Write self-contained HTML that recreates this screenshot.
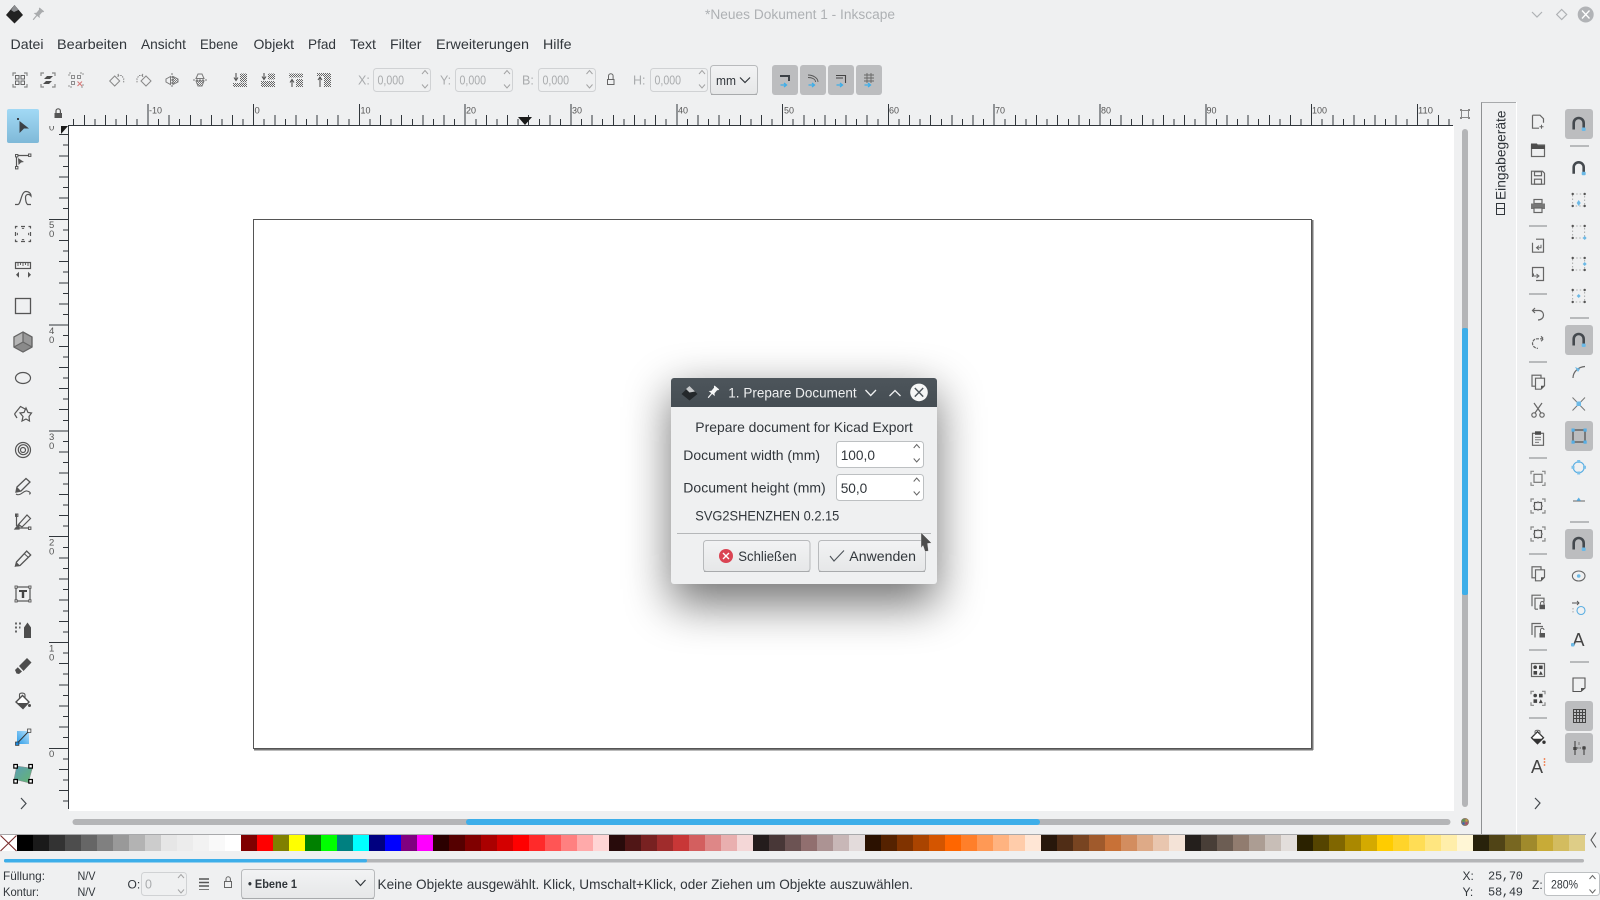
<!DOCTYPE html>
<html lang="de"><head><meta charset="utf-8"><title>Inkscape</title>
<style>
html,body{margin:0;padding:0;background:#eff0f1;width:1600px;height:900px;overflow:hidden}
#w{position:relative;width:1600px;height:900px;overflow:hidden}
svg{position:absolute;left:0;top:0}
text{font-family:"Liberation Sans",sans-serif;fill:#31363b;font-size:14px}
.s{font-size:12px}.r{font-size:9.5px;fill:#555}
.g{fill:#a9abad;font-size:12.5px}
.m{font-family:"Liberation Mono",monospace;font-size:12px}
#p{position:absolute;left:17px;top:835px;height:16px;display:flex}
#p i{display:block;width:16px;height:16px;flex:none}
</style></head><body><div id="w">
<svg width="1600" height="900" viewBox="0 0 1600 900" xmlns="http://www.w3.org/2000/svg">
<defs>
<pattern id="d" width="2" height="2" patternUnits="userSpaceOnUse"><rect width="1" height="1" fill="#666"/><rect x="1" y="1" width="1" height="1" fill="#666"/></pattern>
<linearGradient id="sel" x1="0" y1="0" x2="0" y2="1"><stop offset="0" stop-color="#a2d9f5"/><stop offset="1" stop-color="#7fb9d8"/></linearGradient>
<linearGradient id="btn" x1="0" y1="0" x2="0" y2="1"><stop offset="0" stop-color="#f2f3f4"/><stop offset="1" stop-color="#e6e7e8"/></linearGradient>
<linearGradient id="tb" x1="0" y1="0" x2="0" y2="1"><stop offset="0" stop-color="#4d555b"/><stop offset="1" stop-color="#454d53"/></linearGradient>
<linearGradient id="gr" x1="0" y1="1" x2="1" y2="0"><stop offset="0" stop-color="#2f9de8"/><stop offset="1" stop-color="#b4e0fb"/></linearGradient>
<linearGradient id="ms" x1="0" y1="0" x2="1" y2="1"><stop offset="0" stop-color="#5a9db8"/><stop offset="1" stop-color="#65b56f"/></linearGradient>
<filter id="sh" x="-50%" y="-50%" width="200%" height="200%"><feGaussianBlur stdDeviation="23"/></filter>
<g id="rt" fill="none" stroke="#31363b" stroke-width="1" shape-rendering="crispEdges"><path d="M0 125V104M10.58 125V119M21.16 125V115M31.74 125V119M42.32 125V115M52.9 125V119M63.48 125V115M74.06 125V119M84.64 125V115M95.22 125V119"/></g>
<g id="vt" fill="none" stroke="#31363b" stroke-width="1" shape-rendering="crispEdges"><path d="M68 0H49M68 10.58H63M68 21.16H59M68 31.74H63M68 42.32H59M68 52.9H63M68 63.48H59M68 74.06H63M68 84.64H59M68 95.22H63"/></g>
<g id="mag"><path d="M-5 5.5V-1a5 5 0 0 1 10 0V5.5" fill="none" stroke="#44494e" stroke-width="2.6"/><rect x="3" y="3.5" width="4" height="3.5" rx="1" fill="#6cb9e6"/></g>
<g id="nd"><rect x="-6" y="-6" width="12" height="12" fill="none" stroke="#999" stroke-width=".8" stroke-dasharray="1.5 2"/><g fill="#555"><circle cx="-6" cy="-6" r="1.2"/><circle cx="6" cy="-6" r="1.2"/><circle cx="-6" cy="6" r="1.2"/><circle cx="6" cy="6" r="1.2"/></g></g>
<g id="br" fill="none" stroke="#888" stroke-width="1.2"><path d="M-7-4V-7H-4M4-7H7V-4M7 4V7H4M-4 7H-7V4"/></g>
<g id="ub"><path d="M-3 0 0-3.5 3 0" fill="none" stroke="#666" stroke-width="1"/></g>
<g id="db"><path d="M-3-1.5 0 2 3-1.5" fill="none" stroke="#666" stroke-width="1"/></g>
<g id="ar"><path d="M-4.5 5H1M-1 3 1.5 5-1 7" fill="none" stroke="#3daee9" stroke-width="1.3"/></g>
<path id="pin" d="M-3-6H3V-5L2-4V0L4 2H-4L-2 0V-4L-3-5ZM-.6 2H.6V7.5H-.6Z"/>
</defs>
<rect width="1600" height="900" fill="#eff0f1"/>

<!-- title bar -->
<path d="M14.5 5 23 15 14.5 23.5 6 15Z" fill="#222"/><path d="M14.5 5 18.5 10 14 12 11 10Z" fill="#8b8d90"/>
<use href="#pin" transform="translate(38,14) rotate(40)" fill="#a9abad"/>
<text x="705" y="19" textLength="190" lengthAdjust="spacingAndGlyphs" style="fill:#aeb1b4;font-size:13.5px">*Neues Dokument 1 - Inkscape</text>
<path d="M1532 12 1537 17 1542 12" fill="none" stroke="#aeb1b4" stroke-width="1.2"/>
<path d="M1561.7 9.5 1566.7 14.5 1561.7 19.5 1556.7 14.5Z" fill="none" stroke="#aeb1b4" stroke-width="1.2"/>
<circle cx="1585.7" cy="14.5" r="8" fill="#b1b3b6"/><path d="M1582 10.5 1589.5 18.5M1589.5 10.5 1582 18.5" stroke="#fff" stroke-width="1.3"/>

<!-- menu -->
<g>
<text x="10.5" y="49" textLength="33" lengthAdjust="spacingAndGlyphs">Datei</text>
<text x="57" y="49" textLength="70" lengthAdjust="spacingAndGlyphs">Bearbeiten</text>
<text x="141" y="49" textLength="45" lengthAdjust="spacingAndGlyphs">Ansicht</text>
<text x="200" y="49" textLength="38" lengthAdjust="spacingAndGlyphs">Ebene</text>
<text x="253.5" y="49" textLength="40.5" lengthAdjust="spacingAndGlyphs">Objekt</text>
<text x="308" y="49" textLength="28" lengthAdjust="spacingAndGlyphs">Pfad</text>
<text x="350" y="49" textLength="26" lengthAdjust="spacingAndGlyphs">Text</text>
<text x="390" y="49" textLength="31.5" lengthAdjust="spacingAndGlyphs">Filter</text>
<text x="436" y="49" textLength="93" lengthAdjust="spacingAndGlyphs">Erweiterungen</text>
<text x="543" y="49" textLength="28.5" lengthAdjust="spacingAndGlyphs">Hilfe</text>
</g>

<!-- selector toolbar icons -->
<g fill="none" stroke="#666" stroke-width="1">
<g transform="translate(20,80)"><use href="#br"/><rect x="-4.5" y="-4.5" width="3.5" height="3.5"/><rect x="1" y="-4.5" width="3.5" height="3.5"/><rect x="-4.5" y="1" width="3.5" height="3.5"/><rect x="1" y="1" width="3.5" height="3.5"/></g>
<g transform="translate(48,80)"><use href="#br"/><path d="M-4-1 -1-4H5L2-1ZM-5 4-2 1H4L1 4Z" fill="#4d4d4d" stroke="none"/></g>
<g transform="translate(76,80)" opacity=".7"><use href="#br" stroke-dasharray="2 1"/><rect x="-4.5" y="-4.5" width="3" height="3"/><rect x="1.5" y="-4.5" width="3" height="3"/><rect x="-4.5" y="1.5" width="3" height="3"/><path d="M1.5 1.5 6 6M6 1.5 1.5 6" stroke="#c44"/></g>
<g transform="translate(116.7,80)" opacity=".75"><path d="M-2-2 3 3-2 8-7 3Z" transform="translate(0,-2)"/><path d="M2-6 .5-4.5 2-3M1-4.5H5l2 3V3" stroke-dasharray="1.5 1"/></g>
<g transform="translate(144,80)" opacity=".75"><path d="M2-2 7 3 2 8-3 3Z" transform="translate(0,-2)"/><path d="M-2-6-.5-4.5-2-3M-1-4.5H-5l-2 3V3" stroke-dasharray="1.5 1"/></g>
<g transform="translate(172,80)" opacity=".85"><path d="M0-7V7" stroke-dasharray="2 1"/><path d="M-1.5-3.5-6-1V2L-1.5 4.5Z"/><path d="M1-3.5 6-1V2L1 4.5Z" fill="url(#d)"/></g>
<g transform="translate(200,80)" opacity=".85"><path d="M-7 0H7" stroke-dasharray="2 1"/><path d="M-4-1.5-2-6H2L4-1.5Z"/><path d="M-4 1-2 6H2L4 1Z" fill="url(#d)"/></g>
<g transform="translate(240,80)" stroke="none"><rect x="0" y="-6.5" width="7" height="9" fill="url(#d)"/><rect x="-7" y="3" width="14" height="4" fill="url(#d)"/><path d="M-4-7V0M-6-2.5-4 .5-2-2.5" fill="none" stroke="#555" stroke-width="1.1"/></g>
<g transform="translate(268,80)" stroke="none"><rect x="0" y="-6.5" width="7" height="6" fill="url(#d)"/><rect x="-7" y="1" width="14" height="6" fill="url(#d)"/><path d="M-4-7V-1M-6-3.5-4-.5-2-3.5" fill="none" stroke="#555" stroke-width="1.1"/></g>
<g transform="translate(296,80)" stroke="none"><rect x="0" y="-1" width="7" height="8" fill="url(#d)"/><rect x="-7" y="-6.5" width="14" height="4" fill="url(#d)"/><path d="M-4 7V0M-6 2.5-4-.5-2 2.5" fill="none" stroke="#555" stroke-width="1.1"/></g>
<g transform="translate(324,80)" stroke="none"><rect x="0" y="-7" width="7" height="14" fill="url(#d)"/><rect x="-7" y="-7" width="14" height="3" fill="url(#d)"/><path d="M-4 7V-2.5M-6 0-4-3-2 0" fill="none" stroke="#555" stroke-width="1.1"/></g>
</g>

<!-- X Y B H -->
<g>
<text x="358" y="84.5" class="g">X:</text><rect x="373.5" y="68.5" width="57" height="23" rx="3" fill="#eff0f1" stroke="#d0d2d4"/><text x="377.5" y="84.5" class="g" textLength="26.5" lengthAdjust="spacingAndGlyphs">0,000</text>
<text x="440" y="84.5" class="g">Y:</text><rect x="455.5" y="68.5" width="57" height="23" rx="3" fill="#eff0f1" stroke="#d0d2d4"/><text x="459.5" y="84.5" class="g" textLength="26.5" lengthAdjust="spacingAndGlyphs">0,000</text>
<text x="522" y="84.5" class="g">B:</text><rect x="538.5" y="68.5" width="57" height="23" rx="3" fill="#eff0f1" stroke="#d0d2d4"/><text x="542.5" y="84.5" class="g" textLength="26.5" lengthAdjust="spacingAndGlyphs">0,000</text>
<text x="633" y="84.5" class="g">H:</text><rect x="650.5" y="68.5" width="57" height="23" rx="3" fill="#eff0f1" stroke="#d0d2d4"/><text x="654.5" y="84.5" class="g" textLength="26.5" lengthAdjust="spacingAndGlyphs">0,000</text>
<g opacity=".55"><use href="#ub" x="425" y="74"/><use href="#db" x="425" y="86"/><use href="#ub" x="507" y="74"/><use href="#db" x="507" y="86"/><use href="#ub" x="589.5" y="74"/><use href="#db" x="589.5" y="86"/><use href="#ub" x="702" y="74"/><use href="#db" x="702" y="86"/></g>
<path d="M608.5 79V76a2.3 2.3 0 0 1 4.6 0V79" fill="none" stroke="#666"/><rect x="607.5" y="79.5" width="6.5" height="5" fill="none" stroke="#666"/>
<rect x="710.5" y="65.5" width="47" height="29" rx="3" fill="url(#btn)" stroke="#b8babc"/><path d="M711 94.5H757" stroke="#a8aaac"/>
<text x="716" y="85" style="font-size:13px" textLength="20" lengthAdjust="spacingAndGlyphs">mm</text>
<path d="M740 77.5 745 82.5 750 77.5" fill="none" stroke="#31363b" stroke-width="1.2"/>
</g>

<!-- toggled -->
<g fill="#bcbdbf">
<rect x="772" y="65" width="26" height="30" rx="3"/><rect x="800" y="65" width="26" height="30" rx="3"/><rect x="828" y="65" width="26" height="30" rx="3"/><rect x="856" y="65" width="26" height="30" rx="3"/>
<rect x="1565" y="109" width="28" height="30" rx="3"/><rect x="1565" y="325" width="28" height="30" rx="3"/><rect x="1565" y="421" width="28" height="30" rx="3"/><rect x="1565" y="529" width="28" height="30" rx="3"/><rect x="1565" y="701" width="28" height="30" rx="3"/><rect x="1565" y="733" width="28" height="30" rx="3"/>
</g>
<g transform="translate(785,80)"><path d="M-5-5H5V1H3V-3H-5Z" fill="#3c4146"/><use href="#ar"/></g>
<g transform="translate(813,80)"><path d="M-5-5C0-5 5-2 5 2M-5-2.5C-1-2.5 2.5-1 2.5 2" fill="none" stroke="#555" stroke-width=".9"/><use href="#ar"/></g>
<g transform="translate(841,80)"><path d="M-5-4.5H4.5V3M-5-2H2" fill="none" stroke="#444" stroke-width="1.1"/><use href="#ar"/></g>
<g transform="translate(869,80)"><path d="M-5-5H5M-5-2H5M-5 1H5M-2-7V3M2-7V3" fill="none" stroke="#666" stroke-width=".9"/><use href="#ar"/></g>

<!-- canvas -->
<rect x="69" y="126" width="1385" height="685" fill="#fff"/>
<rect x="253.5" y="219.5" width="1058" height="529" fill="#fff" stroke="#555"/>
<path d="M1312.5 220V750M254 749.5H1313" stroke="#777" shape-rendering="crispEdges" stroke-width="1.5"/>

<!-- ruler h -->
<clipPath id="chr"><rect x="69" y="100" width="1384" height="26"/></clipPath>
<g clip-path="url(#chr)">
<use href="#rt" x="42"/><use href="#rt" x="148"/><use href="#rt" x="253.6"/><use href="#rt" x="359.4"/><use href="#rt" x="465.2"/><use href="#rt" x="571"/><use href="#rt" x="676.8"/><use href="#rt" x="782.6"/><use href="#rt" x="888.4"/><use href="#rt" x="994.2"/><use href="#rt" x="1100"/><use href="#rt" x="1205.8"/><use href="#rt" x="1311.6"/><use href="#rt" x="1417.4"/>
</g>
<path d="M69 125.5H1453" stroke="#31363b" shape-rendering="crispEdges"/>
<g>
<text class="r" x="149" y="113.5" textLength="13" lengthAdjust="spacingAndGlyphs">-10</text><text class="r" x="254.5" y="113.5">0</text><text class="r" x="360.5" y="113.5" textLength="10" lengthAdjust="spacingAndGlyphs">10</text><text class="r" x="466" y="113.5" textLength="10" lengthAdjust="spacingAndGlyphs">20</text><text class="r" x="572" y="113.5" textLength="10" lengthAdjust="spacingAndGlyphs">30</text><text class="r" x="678" y="113.5" textLength="10" lengthAdjust="spacingAndGlyphs">40</text><text class="r" x="784" y="113.5" textLength="10" lengthAdjust="spacingAndGlyphs">50</text><text class="r" x="889" y="113.5" textLength="10" lengthAdjust="spacingAndGlyphs">60</text><text class="r" x="995" y="113.5" textLength="10" lengthAdjust="spacingAndGlyphs">70</text><text class="r" x="1101" y="113.5" textLength="10" lengthAdjust="spacingAndGlyphs">80</text><text class="r" x="1206.5" y="113.5" textLength="10" lengthAdjust="spacingAndGlyphs">90</text><text class="r" x="1312" y="113.5" textLength="15" lengthAdjust="spacingAndGlyphs">100</text><text class="r" x="1418" y="113.5" textLength="15" lengthAdjust="spacingAndGlyphs">110</text>
</g>
<path d="M518 117H532L525 125Z" fill="#1a1a1a"/>

<!-- ruler v -->
<clipPath id="cvr"><rect x="45" y="126" width="24" height="684"/></clipPath>
<g clip-path="url(#cvr)">
<use href="#vt" y="113.5"/><use href="#vt" y="219.3"/><use href="#vt" y="325.1"/><use href="#vt" y="430.9"/><use href="#vt" y="536.7"/><use href="#vt" y="642.5"/><use href="#vt" y="748.3"/>
<text class="r" x="49" y="130.5">0</text>
<text class="r" x="49" y="228">5</text><text class="r" x="49" y="237">0</text>
<text class="r" x="49" y="334">4</text><text class="r" x="49" y="343">0</text>
<text class="r" x="49" y="440">3</text><text class="r" x="49" y="449">0</text>
<text class="r" x="49" y="545.5">2</text><text class="r" x="49" y="554.5">0</text>
<text class="r" x="49" y="651.5">1</text><text class="r" x="49" y="660.5">0</text>
<text class="r" x="49" y="757">0</text>
</g>
<path d="M68.5 125V809" stroke="#31363b" shape-rendering="crispEdges"/>
<path d="M61 126H68L61 134Z" fill="#1a1a1a"/>
<!-- ruler lock -->
<path d="M56 113V111a2.2 2.2 0 0 1 4.4 0V113" fill="none" stroke="#555" stroke-width="1.2"/><rect x="54.5" y="113" width="7.5" height="5" fill="#555"/>

<!-- left toolbar -->
<rect x="7" y="109" width="32" height="34" rx="2" fill="url(#sel)"/>
<g fill="none" stroke="#555" stroke-width="1.2">
<rect x="17" y="118" width="2" height="2" fill="#3b4045" stroke="none"/>
<path d="M19.5 121 29 128.5H24L19.5 133Z" fill="#3b4045" stroke="none"/>
<!-- node -->
<path d="M16.5 157V166M18 155.5H28"/><rect x="15.5" y="154.5" width="2.4" height="2.4" stroke-width="1"/><rect x="28.5" y="154" width="2.4" height="2.4" stroke-width="1"/><rect x="15.5" y="166.5" width="2.4" height="2.4" stroke-width="1"/>
<path d="M18 158 24 162 21 162.5 18.5 165Z" fill="#555" stroke="none"/>
<!-- curve -->
<path d="M15 204.5H18C21 204 21 191.5 26 191.5 29 191.5 31 193.5 31 196 29 193.5 26 194 25.5 197 25.5 200 26 203 27.5 204.5H31"/>
<!-- zoom select -->
<rect x="15.5" y="226.5" width="15" height="15" stroke-dasharray="4 3.5" stroke-dashoffset="2"/>
<path d="M23 227.5 21.5 229H24.5ZM23 240.5 21.5 239H24.5ZM16.5 234 18 232.5V235.5ZM29.5 234 28 232.5V235.5Z" fill="#555" stroke="none"/>
<!-- measure -->
<rect x="15.5" y="262.5" width="15" height="6"/><path d="M18 263V266M20.5 263V265M23 263V266M25.5 263V265M28 263V266" stroke-width=".9"/>
<path d="M16 274.7 19 271.7V277.7ZM31 274.7 28 271.7V277.7Z" fill="#555" stroke="none"/>
<rect x="15.5" y="298.5" width="15" height="15" stroke="#555" stroke-width="1.3"/>
<!-- 3d -->
<path d="M23 332 32 337V347L23 352 14 347V337Z" fill="#999" stroke="#555"/><path d="M23 332 14 337V347L23 342Z" fill="#b5b5b5" stroke="none"/><path d="M23 342 14 347 23 352 32 347Z" fill="#8a8a8a" stroke="none"/><path d="M23 332V342L14 347M23 342 32 347M23 332 32 337V347L23 352 14 347V337Z" stroke="#666"/>
<ellipse cx="23" cy="378" rx="7.5" ry="5.5"/>
<!-- star -->
<path d="M14.5 414 20.5 406.5 26 409.5M17 418 14.5 414"/><path d="M26 408 28 412.5 31.5 413 29 416.5 29.5 421 26 419 22 421 23 416.5 20 413 24 412.5Z"/>
<!-- spiral -->
<circle cx="23" cy="450" r="7.5"/><circle cx="23.3" cy="449.7" r="5"/><circle cx="23" cy="450" r="2.5"/>
<!-- pencil -->
<path d="M17 487 26 478.5 30 482 21 491 16 492Z" stroke-width="1.3"/><path d="M16 494C20 497 24 490 27 491 31 492 31 494 29 494" stroke-width="1.1"/><path d="M16 492 17 487 21 491Z" fill="#555" stroke="none"/>
<!-- pen -->
<path d="M16.5 514V526M19 528H28" /><rect x="15.5" y="514" width="2.4" height="2.4" stroke-width="1"/><rect x="28.5" y="527" width="2.4" height="2.4" stroke-width="1"/><path d="M15 529 19 524V529Z" fill="#555" stroke="#555"/><path d="M18.5 524.5 27 515 30.5 518.5 22 527Z"/>
<!-- calligraphy -->
<path d="M15.5 566 16.5 562 26.7 551 30.7 555 20 565.5Z" stroke-width="1.3"/><path d="M15.5 566 16.5 563 19 565.5Z" fill="#555"/><path d="M24 553.5 28.5 557.5" stroke-width="1"/>
<!-- text -->
<rect x="16" y="587" width="14" height="14"/><g fill="#fff"><rect x="15" y="586" width="2.2" height="2.2" stroke-width=".9"/><rect x="28.8" y="586" width="2.2" height="2.2" stroke-width=".9"/><rect x="15" y="599.8" width="2.2" height="2.2" stroke-width=".9"/><rect x="28.8" y="599.8" width="2.2" height="2.2" stroke-width=".9"/></g>
<path d="M19 590H27V592H24.2V598H21.8V592H19Z" fill="#444" stroke="none"/>
<!-- spray -->
<path d="M24 638V627.5L27.5 622.5 31 627.5V638Z" fill="#4d4d4d" stroke="none"/><path d="M15 622.5h2v2h-2zM19 622.5h2v2h-2zM15 626.5h2v2h-2zM19 626.5h1.5v2h-1.5zM15 630.5h2v2h-2z" fill="#666" stroke="none"/>
<!-- eraser -->
<path d="M19 666 27 658 31.5 662.5 23.5 671Z" fill="#4d4d4d" stroke="none"/><path d="M15 670 17.8 667.3 22 671.5 19 674 16.5 673.5Z" fill="#4d4d4d" stroke="none"/>
<!-- bucket -->
<path d="M16 702 22.5 695.5 29 702 23 708.5Z" fill="#fff" stroke="#4d4d4d" stroke-width="1.4"/><path d="M17.5 703H28.5L23 708.5Z" fill="#4d4d4d" stroke="none"/><path d="M19.5 698V694.5C19.5 692.5 25 692.5 25 695V698" stroke-width="1.1"/><circle cx="29.5" cy="705.5" r="1.5" fill="#4d4d4d" stroke="none"/>
</g>
<rect x="17" y="731" width="12" height="13" fill="url(#gr)"/>
<path d="M17 743.5 28.5 731.5" stroke="#333" stroke-width="1"/><rect x="15.5" y="742" width="3.4" height="3.4" fill="#1e88d8" stroke="#333" stroke-width=".7"/><rect x="27.5" y="729" width="3.4" height="3.4" fill="#eee" stroke="#333" stroke-width=".7"/>
<path d="M16.7 766 32.3 768.3 28.3 782.7 14 779.3Z" fill="url(#ms)" stroke="#888" stroke-width=".5"/>
<g fill="#fff" stroke="#000" stroke-width="1.2"><rect x="13.8" y="764.5" width="3.6" height="3.6"/><rect x="28.8" y="764.5" width="3.6" height="3.6"/><rect x="13.8" y="779.5" width="3.6" height="3.6"/><rect x="28.8" y="779.5" width="3.6" height="3.6"/></g>
<path d="M21 798 26 803.5 21 809" fill="none" stroke="#44494e" stroke-width="1.2"/>

<!-- scrollbars -->
<rect x="1462" y="129" width="6" height="678" rx="3" fill="#b4b5b7"/>
<rect x="1462" y="328" width="6" height="267" rx="2" fill="#3daee9"/>
<rect x="72.5" y="819" width="1378" height="6" rx="3" fill="#b4b5b7"/>
<rect x="466" y="819" width="574" height="6" rx="3" fill="#3daee9"/>
<circle cx="1465" cy="822" r="4" fill="#8a7a6a"/><circle cx="1463.5" cy="820.5" r="1.2" fill="#4fa04f"/><circle cx="1466.5" cy="820.5" r="1.2" fill="#c9a13a"/><circle cx="1463.5" cy="823.5" r="1.2" fill="#3a66b4"/><circle cx="1466.5" cy="823.5" r="1.2" fill="#b4486a"/>
<rect x="1461.5" y="110.5" width="7" height="7" fill="none" stroke="#888"/><g fill="#888"><rect x="1460" y="109" width="2" height="2"/><rect x="1468" y="109" width="2" height="2"/><rect x="1460" y="117" width="2" height="2"/><rect x="1468" y="117" width="2" height="2"/></g>

<!-- dock -->
<path d="M1481.5 102V834" stroke="#8f9193" shape-rendering="crispEdges"/>
<path d="M1481.5 102.5H1517" stroke="#a8aaac" shape-rendering="crispEdges"/>
<path d="M1516.5 102V834" stroke="#fff" shape-rendering="crispEdges"/>
<text transform="translate(1505.5,200) rotate(-90)" textLength="89.5" lengthAdjust="spacingAndGlyphs">Eingabegeräte</text>
<rect x="1496.5" y="203.5" width="8" height="11" fill="none" stroke="#31363b"/><path d="M1497 208.5H1504" stroke="#31363b"/>

<!-- right toolbar separators -->
<g fill="#b8babc">
<rect x="1529" y="225" width="18" height="2"/><rect x="1529" y="293" width="18" height="2"/><rect x="1529" y="361" width="18" height="2"/><rect x="1529" y="457" width="18" height="2"/><rect x="1529" y="553" width="18" height="2"/><rect x="1529" y="649" width="18" height="2"/><rect x="1529" y="717" width="18" height="2"/>
<rect x="1570" y="145" width="19" height="2"/><rect x="1570" y="317" width="19" height="2"/><rect x="1570" y="521" width="19" height="2"/><rect x="1570" y="661" width="19" height="2"/>
</g>

<!-- right toolbar 1 -->
<g fill="none" stroke="#666" stroke-width="1.2">
<g transform="translate(1538,121.7)"><path d="M-5.5-6.5H2L5.5-3V1M1 6.5H-5.5V-6.5"/><path d="M3.5 3V7M1.5 5H5.5" stroke-width="1"/></g>
<g transform="translate(1538,150)"><rect x="-6.5" y="-5" width="13" height="11.5"/><path d="M-7-6.5H-1L0-4.5H7V-1H-7Z" fill="#4d4d4d" stroke="none"/></g>
<g transform="translate(1538,177.7)"><path d="M-6.5-6.5H4.5L6.5-4.5V6.5H-6.5Z"/><rect x="-3.5" y="-6" width="7" height="4"/><rect x="-3.5" y="1.5" width="7" height="5"/></g>
<g transform="translate(1538,206)"><rect x="-4" y="-6.5" width="8" height="4"/><path d="M-7-2.5H7V3H-7Z" fill="#777" stroke="none"/><rect x="-4" y="2" width="8" height="4.5" fill="#eff0f1"/></g>
<g transform="translate(1538,245.7)"><path d="M-5.5-3V6.5H5.5V-6.5H-2"/><path d="M3-1V2H-1M1 0-1.5 2 1 4" stroke-width="1"/></g>
<g transform="translate(1538,274)"><path d="M-5.5 3V-6.5H5.5V6.5H-2"/><path d="M-4.5-.5V2H0M-1.5 0 1 2-1.5 4" stroke-width="1"/></g>
<g transform="translate(1538,314)"><path d="M-3-6-5.5-3.5-3-1M-5-3.5H1C4-3.5 5.5-1 5.5 1 5.5 4 3 6 0 6"/></g>
<g transform="translate(1538,342.3)"><path d="M3-6 5.5-3.5 3-1M5-3.5H-1C-4-3.5-5.5-1-5.5 1-5.5 4-3 6 0 6" stroke-dasharray="3 1"/></g>
<g transform="translate(1538,381.7)"><rect x="-6" y="-6.5" width="9" height="11"/><path d="M-2.5-3.5H6.5V4L3 7.5H-2.5Z" fill="#eff0f1"/><path d="M6.5 4 3 7.5V4Z" fill="#555" stroke="none"/></g>
<g transform="translate(1538,410)"><path d="M-4-7 3 3M4-7-3 3"/><circle cx="-4" cy="5" r="2.2"/><circle cx="4" cy="5" r="2.2"/></g>
<g transform="translate(1538,438.3)"><rect x="-5.5" y="-5" width="11" height="12"/><rect x="-3" y="-7" width="6" height="3.5" fill="#4d4d4d" stroke="none"/><path d="M-3-1H3M-3 1.5H3M-3 4H1" stroke-width=".9"/></g>
<g transform="translate(1538,478.3)"><use href="#br"/><rect x="-4" y="-4" width="8" height="8" stroke="#777"/></g>
<g transform="translate(1538,506)"><use href="#br"/><rect x="-3.5" y="-3.5" width="7" height="7" stroke="#555"/><path d="M-5 0H-3M3 0H5M0-5V-3M0 3V5" stroke="#888"/></g>
<g transform="translate(1538,534)"><use href="#br"/><rect x="-3.5" y="-3.5" width="7" height="7" stroke="#555"/><path d="M-5 0H-3M3 0H5M0-5V-3M0 3V5" stroke="#888"/></g>
<g transform="translate(1538,573.3)"><rect x="-6" y="-6.5" width="9" height="11"/><path d="M-2.5-3.5H6.5V4L3 7.5H-2.5Z" fill="#eff0f1"/><path d="M6.5 4 3 7.5V4Z" fill="#555" stroke="none"/></g>
<g transform="translate(1538,601.7)"><path d="M-6 4.5V-6.5H3"/><path d="M-3 7.5V-3.5H6V0M0 7.5H-3"/><rect x="1.5" y="3" width="5.5" height="4.5" fill="#555" stroke="none"/><path d="M2.5 3V1.5A1.7 1.7 0 0 1 6 1.5V3" stroke-width="1"/></g>
<g transform="translate(1538,630)"><path d="M-6 5V-6.5H3"/><path d="M-3 7.5V-3.5H5"/><rect x="1.5" y="3" width="5.5" height="4.5" fill="#555" stroke="none"/><path d="M2.5 3V0A1.7 1.7 0 0 1 6 0" stroke-width="1"/></g>
<g transform="translate(1538,670)"><rect x="-6.5" y="-6.5" width="13" height="13"/><circle cx="-2.8" cy="-2.8" r="1.8" fill="#444" stroke="none"/><rect x="1" y="-4.5" width="3.6" height="3.6" fill="#444" stroke="none"/><rect x="-4.5" y="1" width="3.6" height="3.6" fill="#444" stroke="none"/><path d="M2.8 1 4.8 4.8H.8Z" fill="#444" stroke="none"/></g>
<g transform="translate(1538,698.3)"><use href="#br"/><circle cx="-2.8" cy="-2.8" r="1.8" fill="#444" stroke="none"/><rect x="1" y="-4.5" width="3.6" height="3.6" fill="#444" stroke="none"/><rect x="-4.5" y="1" width="3.6" height="3.6" fill="#444" stroke="none"/><path d="M2.8 1 4.8 4.8H.8Z" fill="#444" stroke="none"/></g>
<g transform="translate(1538,737.7)"><path d="M-6.5 0-.5-6 5.5 0-.5 6Z" fill="#fff" stroke="#333" stroke-width="1.3"/><path d="M-5.5 1H4.5L-.5 6Z" fill="#333" stroke="none"/><path d="M-3-3V-6C-3-8 2-8 2-6V-3" stroke-width="1"/><circle cx="6" cy="4.5" r="1.7" fill="#333" stroke="none"/></g>
<path d="M1535 798 1540 803 1535 809" stroke="#44494e"/>
</g>
<text x="1531" y="773" style="font-size:18px;fill:#444">A</text>
<g fill="#f0703a"><circle cx="1544.5" cy="759" r=".9"/><circle cx="1544.5" cy="762" r=".9"/><circle cx="1544.5" cy="765" r=".9"/></g>

<!-- right toolbar 2 -->
<use href="#mag" x="1578.7" y="124"/>
<use href="#mag" x="1578.7" y="168.3"/>
<use href="#nd" x="1578.7" y="200"/><path d="M1578.7 200 1576.7 203 1578.7 206 1580.7 203Z" fill="#6cb9e6"/>
<use href="#nd" x="1578.7" y="232"/><path d="M1584.7 236 1582.7 238 1584.7 240 1586.7 238Z" fill="#6cb9e6"/>
<use href="#nd" x="1578.7" y="264"/><path d="M1584.7 262 1582.7 264 1584.7 266 1586.7 264Z" fill="#6cb9e6"/>
<use href="#nd" x="1578.7" y="296"/><path d="M1578.7 294 1576.7 296 1578.7 298 1580.7 296Z" fill="#6cb9e6"/>
<use href="#mag" x="1578.7" y="340"/>
<path d="M1573 378C1573 372 1578 367 1585 366.5" fill="none" stroke="#666" stroke-width="1.2"/><path d="M1575 367 1580 369 1578 372Z" fill="#6cb9e6"/>
<path d="M1572.5 397.5 1585 410.5M1585 397.5 1572.5 410.5" stroke="#777" stroke-width="1"/><rect x="1576.5" y="401.5" width="4.5" height="4.5" fill="#6cb9e6"/>
<rect x="1573" y="430" width="12" height="12" fill="none" stroke="#555" stroke-width="1.3"/><g fill="#55aee5"><rect x="1571.5" y="428.5" width="3.2" height="3.2"/><rect x="1583.5" y="428.5" width="3.2" height="3.2"/><rect x="1571.5" y="440.5" width="3.2" height="3.2"/><rect x="1583.5" y="440.5" width="3.2" height="3.2"/></g>
<circle cx="1578.7" cy="467.3" r="5.5" fill="none" stroke="#5aaee2" stroke-width="1.1"/><g fill="#7cc1ea"><rect x="1577.2" y="460" width="3" height="3"/><rect x="1577.2" y="471.5" width="3" height="3"/><rect x="1571.5" y="465.8" width="3" height="3"/><rect x="1583" y="465.8" width="3" height="3"/></g>
<path d="M1573 501H1585" stroke="#666"/><path d="M1578.7 497.5 1581 500.7H1576.4Z" fill="#5aaee2"/>
<use href="#mag" x="1578.7" y="544"/>
<ellipse cx="1578.7" cy="576" rx="6.3" ry="5" fill="none" stroke="#666" stroke-width="1.1"/><circle cx="1578.7" cy="576" r="1.8" fill="#6cb9e6"/>
<circle cx="1581" cy="610.5" r="4" fill="none" stroke="#5aaee2" stroke-width="1.1"/><path d="M1572 603H1579M1577 601 1579 603 1577 605" fill="none" stroke="#555" stroke-width=".9"/><path d="M1573 608v6" stroke="#aaa" stroke-dasharray="1.5 1.5"/>
<text x="1572.5" y="646" style="font-size:18px;fill:#444" textLength="12" lengthAdjust="spacingAndGlyphs">A</text><rect x="1571" y="643" width="3.5" height="3.5" rx="1" fill="#6cb9e6"/>
<path d="M1573 678H1585V688L1581 691.5H1573Z" fill="none" stroke="#555" stroke-width="1.1"/><path d="M1585 688 1581 691.5V688Z" fill="#555"/>
<path d="M1573.5 709.5H1585.5V722.5H1573.5ZM1573.5 712.5H1585.5M1573.5 715.5H1585.5M1573.5 718.5H1585.5M1576.5 709.5V722.5M1579.5 709.5V722.5M1582.5 709.5V722.5" fill="none" stroke="#444" stroke-width="1"/>
<path d="M1575 741V755M1584 746V755" fill="none" stroke="#444" stroke-width="1.1"/><path d="M1577 748H1582" stroke="#555" stroke-dasharray="1.5 1"/><rect x="1573.3" y="747" width="3.4" height="3" fill="#444"/><rect x="1582.3" y="746.5" width="3.4" height="3" fill="#444"/><path d="M1579 742v3" stroke="#777"/>

<!-- palette chrome -->
<path d="M0 834.5H1586" stroke="#a8a9ab" shape-rendering="crispEdges"/>
<rect x="0" y="835" width="17" height="16" fill="#fff"/><path d="M.5 835.5 16.5 851M16.5 835.5 .5 851" stroke="#7a2b2b" stroke-width="1.1"/>
<path d="M1596 832.5 1591 840 1596 847.5" fill="none" stroke="#555" stroke-width="1.1"/>
<rect x="4" y="859" width="1580" height="3.5" rx="1.7" fill="#b4b5b7"/>
<rect x="4" y="859" width="363" height="3.5" rx="1.7" fill="#3daee9"/>

<!-- status -->
<text class="s" x="3" y="880" textLength="42" lengthAdjust="spacingAndGlyphs">Füllung:</text>
<text class="s" x="3" y="896" textLength="36" lengthAdjust="spacingAndGlyphs">Kontur:</text>
<text class="s" x="77.5" y="880" textLength="18" lengthAdjust="spacingAndGlyphs">N/V</text>
<text class="s" x="77.5" y="896" textLength="18" lengthAdjust="spacingAndGlyphs">N/V</text>
<text class="s" x="127.5" y="888.5">O:</text>
<rect x="141.5" y="872.5" width="45" height="23" rx="3" fill="#eff0f1" stroke="#d0d2d4"/>
<text class="g" x="145" y="888.5">0</text>
<g opacity=".55"><use href="#ub" x="181" y="878"/><use href="#db" x="181" y="891"/></g>
<path d="M199 879H209M199 882.5H209M199 886H209" stroke="#555" stroke-width="1.5" fill="none"/><path d="M199 889.5H209" stroke="#777" stroke-width="1"/>
<path d="M226 881V879a2.2 2.2 0 0 1 4.4 0V881" fill="none" stroke="#666"/><rect x="224.5" y="881.5" width="7" height="6" fill="none" stroke="#666"/>
<rect x="241.5" y="869.5" width="133" height="29" rx="3" fill="url(#btn)" stroke="#b8babc"/><path d="M242 898.5H374" stroke="#a8aaac"/>
<text x="248" y="888" style="font-size:11.5px;font-weight:bold" textLength="49" lengthAdjust="spacingAndGlyphs">• Ebene 1</text>
<path d="M355.5 880 360.5 885.5 365.5 880" fill="none" stroke="#31363b" stroke-width="1.2"/>
<text x="377.5" y="889" textLength="535.5" lengthAdjust="spacingAndGlyphs">Keine Objekte ausgewählt. Klick, Umschalt+Klick, oder Ziehen um Objekte auszuwählen.</text>
<text class="s" x="1462.5" y="880">X:</text><text class="s" x="1462.5" y="896">Y:</text>
<text class="m" x="1488" y="879.5" textLength="35">25,70</text><text class="m" x="1488" y="895.5" textLength="35">58,49</text>
<text class="s" x="1532" y="889">Z:</text>
<rect x="1544.5" y="872.5" width="55" height="23" rx="3" fill="#fff" stroke="#bdc0c2"/>
<text class="s" x="1551" y="888.5" textLength="27" lengthAdjust="spacingAndGlyphs">280%</text>
<use href="#ub" x="1592.5" y="879"/><use href="#db" x="1592.5" y="891"/>

<!-- dialog shadow -->
<rect x="671" y="392" width="266" height="212" fill="#000" opacity=".55" filter="url(#sh)"/>
<!-- dialog -->
<rect x="671" y="378" width="266" height="206" rx="3" fill="#eff0f1"/>
<path d="M671 407V381a3 3 0 0 1 3-3H934a3 3 0 0 1 3 3V407Z" fill="url(#tb)"/>
<path d="M689.5 386 697.5 394 689.5 400.5 681.5 394Z" fill="#24282b"/><path d="M689.5 386 695 391.5 689.5 392.5 686 389Z" fill="#c8cacc"/>
<use href="#pin" transform="translate(713,392) rotate(40)" fill="#f6f7f7"/>
<text x="728.3" y="397.5" textLength="128.4" lengthAdjust="spacingAndGlyphs" style="fill:#eff0f1">1. Prepare Document</text>
<path d="M865.5 390 870.7 395.5 876 390" fill="none" stroke="#eff0f1" stroke-width="1.3"/>
<path d="M889.5 396 895 390.5 900.5 396" fill="none" stroke="#eff0f1" stroke-width="1.3"/>
<circle cx="919" cy="392.4" r="8.8" fill="#f6f7f7"/><path d="M914.8 388 923.2 396.6M923.2 388 914.8 396.6" stroke="#4d555b" stroke-width="1.4"/>
<text x="695.3" y="432" textLength="217.4" lengthAdjust="spacingAndGlyphs">Prepare document for Kicad Export</text>
<text x="683.3" y="460" textLength="136.7" lengthAdjust="spacingAndGlyphs">Document width (mm)</text>
<text x="683.3" y="492.5" textLength="142.4" lengthAdjust="spacingAndGlyphs">Document height (mm)</text>
<rect x="836.5" y="441.5" width="87" height="26" rx="3" fill="#fff" stroke="#bdc0c2"/>
<rect x="836.5" y="474.5" width="87" height="26" rx="3" fill="#fff" stroke="#bdc0c2"/>
<text x="840.7" y="460" textLength="34.3" lengthAdjust="spacingAndGlyphs">100,0</text>
<text x="840.7" y="493" textLength="26.6" lengthAdjust="spacingAndGlyphs">50,0</text>
<use href="#ub" x="916.7" y="448"/><use href="#db" x="916.7" y="460"/><use href="#ub" x="916.7" y="481.5"/><use href="#db" x="916.7" y="493"/>
<text x="695.3" y="520.5" textLength="144" lengthAdjust="spacingAndGlyphs">SVG2SHENZHEN 0.2.15</text>
<path d="M677 533.5H931" stroke="#b5b7b9" shape-rendering="crispEdges"/>
<rect x="703.5" y="540.5" width="106.5" height="31" rx="3" fill="url(#btn)" stroke="#b8babc"/><path d="M704 571.5H809.5" stroke="#a8aaac"/>
<circle cx="726" cy="556" r="7" fill="#da4453"/><path d="M723 553 729 559M729 553 723 559" stroke="#fff" stroke-width="1.4"/>
<text x="738.3" y="561" textLength="58.4" lengthAdjust="spacingAndGlyphs">Schließen</text>
<rect x="818.5" y="540.5" width="107" height="31" rx="3" fill="url(#btn)" stroke="#b8babc"/><path d="M819 571.5H925" stroke="#a8aaac"/>
<path d="M830 556 834 561 844 550.5" fill="none" stroke="#4d5359" stroke-width="1.1"/>
<text x="849.3" y="561" textLength="66.7" lengthAdjust="spacingAndGlyphs">Anwenden</text>
<path d="M921 532.5 931.5 543 927.5 543.5 928.5 551 925 551.5 923 545.5 921 548Z" fill="#4d4d4d" stroke="#eee" stroke-width=".4"/>
</svg>
<div id="p"><i style="background:#000"></i><i style="background:#1a1a1a"></i><i style="background:#333"></i><i style="background:#4d4d4d"></i><i style="background:#666"></i><i style="background:#808080"></i><i style="background:#999"></i><i style="background:#b3b3b3"></i><i style="background:#ccc"></i><i style="background:#e6e6e6"></i><i style="background:#ececec"></i><i style="background:#f2f2f2"></i><i style="background:#f9f9f9"></i><i style="background:#fff"></i><i style="background:#800000"></i><i style="background:#f00"></i><i style="background:#808000"></i><i style="background:#ff0"></i><i style="background:#008000"></i><i style="background:#0f0"></i><i style="background:#008080"></i><i style="background:#0ff"></i><i style="background:#000080"></i><i style="background:#00f"></i><i style="background:#800080"></i><i style="background:#f0f"></i><i style="background:#2b0000"></i><i style="background:#500"></i><i style="background:#800000"></i><i style="background:#a00"></i><i style="background:#d40000"></i><i style="background:#f00"></i><i style="background:#ff2a2a"></i><i style="background:#f55"></i><i style="background:#ff8080"></i><i style="background:#faa"></i><i style="background:#ffd5d5"></i><i style="background:#280b0b"></i><i style="background:#501616"></i><i style="background:#782121"></i><i style="background:#a02c2c"></i><i style="background:#c83737"></i><i style="background:#d35f5f"></i><i style="background:#de8787"></i><i style="background:#e9afaf"></i><i style="background:#f4d7d7"></i><i style="background:#241c1c"></i><i style="background:#483737"></i><i style="background:#6c5353"></i><i style="background:#916f6f"></i><i style="background:#ac9393"></i><i style="background:#c8b7b7"></i><i style="background:#e3dbdb"></i><i style="background:#2b1100"></i><i style="background:#520"></i><i style="background:#803300"></i><i style="background:#a40"></i><i style="background:#d45500"></i><i style="background:#f60"></i><i style="background:#ff7f2a"></i><i style="background:#f95"></i><i style="background:#ffb380"></i><i style="background:#fca"></i><i style="background:#ffe6d5"></i><i style="background:#28170b"></i><i style="background:#502d16"></i><i style="background:#784421"></i><i style="background:#a05a2c"></i><i style="background:#c87137"></i><i style="background:#d38d5f"></i><i style="background:#deaa87"></i><i style="background:#e9c6af"></i><i style="background:#f4e3d7"></i><i style="background:#241f1c"></i><i style="background:#483e37"></i><i style="background:#6c5d53"></i><i style="background:#917c6f"></i><i style="background:#ac9d93"></i><i style="background:#c8beb7"></i><i style="background:#e3dedb"></i><i style="background:#2b2200"></i><i style="background:#540"></i><i style="background:#806600"></i><i style="background:#a80"></i><i style="background:#d4aa00"></i><i style="background:#fc0"></i><i style="background:#ffd42a"></i><i style="background:#fd5"></i><i style="background:#ffe680"></i><i style="background:#fea"></i><i style="background:#fff6d5"></i><i style="background:#28220b"></i><i style="background:#504416"></i><i style="background:#786721"></i><i style="background:#a08a2c"></i><i style="background:#c8ab37"></i><i style="background:#d3bc5f"></i><i style="background:#decd87"></i></div>
</div></body></html>
